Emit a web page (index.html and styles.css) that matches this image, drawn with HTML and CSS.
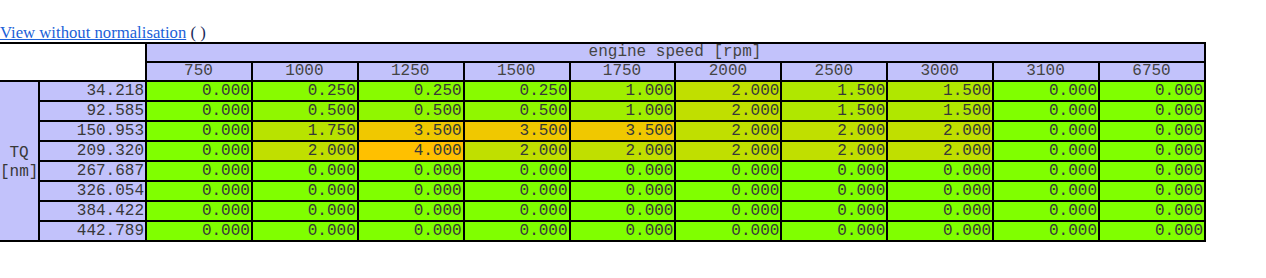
FILE: index.html
```html
<!DOCTYPE html>
<html>
<head>
<meta charset="utf-8">
<title>Map</title>
<link rel="stylesheet" href="styles.css">
</head>
<body>
<div class="toolbar"><a class="navlink" href="#">View without normalisation</a> <span class="paren">( )</span></div>
<table class="map">
<colgroup><col class="c-axis"><col class="c-row"><col><col><col><col><col><col><col><col><col><col></colgroup>
<tr class="hr"><td class="corner" colspan="2" rowspan="2"></td><th class="hd" colspan="10">engine speed [rpm]</th></tr>
<tr class="hr"><th class="hd">750</th><th class="hd">1000</th><th class="hd">1250</th><th class="hd">1500</th><th class="hd">1750</th><th class="hd">2000</th><th class="hd">2500</th><th class="hd">3000</th><th class="hd">3100</th><th class="hd">6750</th></tr>
<tr class="dr"><th class="axis" rowspan="8">TQ<br>[nm]</th><th class="rh">34.218</th><td class="v0">0.000</td><td class="v025">0.250</td><td class="v025">0.250</td><td class="v025">0.250</td><td class="v1">1.000</td><td class="v2">2.000</td><td class="v15">1.500</td><td class="v15">1.500</td><td class="v0">0.000</td><td class="v0">0.000</td></tr>
<tr class="dr"><th class="rh">92.585</th><td class="v0">0.000</td><td class="v05">0.500</td><td class="v05">0.500</td><td class="v05">0.500</td><td class="v1">1.000</td><td class="v2">2.000</td><td class="v15">1.500</td><td class="v15">1.500</td><td class="v0">0.000</td><td class="v0">0.000</td></tr>
<tr class="dr"><th class="rh">150.953</th><td class="v0">0.000</td><td class="v175">1.750</td><td class="v35">3.500</td><td class="v35">3.500</td><td class="v35">3.500</td><td class="v2">2.000</td><td class="v2">2.000</td><td class="v2">2.000</td><td class="v0">0.000</td><td class="v0">0.000</td></tr>
<tr class="dr"><th class="rh">209.320</th><td class="v0">0.000</td><td class="v2">2.000</td><td class="v4">4.000</td><td class="v2">2.000</td><td class="v2">2.000</td><td class="v2">2.000</td><td class="v2">2.000</td><td class="v2">2.000</td><td class="v0">0.000</td><td class="v0">0.000</td></tr>
<tr class="dr"><th class="rh">267.687</th><td class="v0">0.000</td><td class="v0">0.000</td><td class="v0">0.000</td><td class="v0">0.000</td><td class="v0">0.000</td><td class="v0">0.000</td><td class="v0">0.000</td><td class="v0">0.000</td><td class="v0">0.000</td><td class="v0">0.000</td></tr>
<tr class="dr"><th class="rh">326.054</th><td class="v0">0.000</td><td class="v0">0.000</td><td class="v0">0.000</td><td class="v0">0.000</td><td class="v0">0.000</td><td class="v0">0.000</td><td class="v0">0.000</td><td class="v0">0.000</td><td class="v0">0.000</td><td class="v0">0.000</td></tr>
<tr class="dr"><th class="rh">384.422</th><td class="v0">0.000</td><td class="v0">0.000</td><td class="v0">0.000</td><td class="v0">0.000</td><td class="v0">0.000</td><td class="v0">0.000</td><td class="v0">0.000</td><td class="v0">0.000</td><td class="v0">0.000</td><td class="v0">0.000</td></tr>
<tr class="dr"><th class="rh">442.789</th><td class="v0">0.000</td><td class="v0">0.000</td><td class="v0">0.000</td><td class="v0">0.000</td><td class="v0">0.000</td><td class="v0">0.000</td><td class="v0">0.000</td><td class="v0">0.000</td><td class="v0">0.000</td><td class="v0">0.000</td></tr>
</table>
</body>
</html>
```
FILE: styles.css
```css
html, body {
  margin: 0;
  padding: 0;
  background: #fff;
}
body {
  padding-top: 23px;
  font-family: "Liberation Serif", "Times New Roman", serif;
  font-size: 16px;
}
.toolbar {
  line-height: 19px;
  height: 19px;
  font-size: 16.7px;
}
.navlink {
  color: #1b5fd8;
  text-decoration: underline;
}
.paren {
  color: #1a2a5a;
}
.map {
  border-collapse: separate;
  border-spacing: 0;
  table-layout: fixed;
  width: 1206px;
  border-top: 2px solid #000;
  font-family: "Liberation Mono", "Courier New", monospace;
  font-size: 16px;
  color: #383838;
}
.c-axis { width: 40px; }
.c-row { width: 107px; }
.map th, .map td {
  box-sizing: border-box;
  padding: 0 1px 0 0;
  border-right: 2px solid #000;
  border-bottom: 2px solid #000;
  font-weight: normal;
  white-space: nowrap;
  overflow: hidden;
}
.hr { height: 19px; }
.hr th, .hr td { line-height: 17px; }
.dr { height: 20px; }
.dr th, .dr td { line-height: 18px; text-align: right; }
.corner { background: #fff; }
.hd {
  background: #c2c2fb;
  text-align: center;
  color: #444;
}
.map .axis {
  background: #c2c2fb;
  text-align: center;
  vertical-align: middle;
  line-height: 19px;
  padding: 3px 0 0 0;
}
.map .rh {
  background: #c2c2fb;
  text-align: right;
  padding-right: 1px;
}
.v0 { background: #80ff00; }
.v025 { background: #88fb00; }
.v05 { background: #90f700; }
.v1 { background: #a0ef00; }
.v15 { background: #b0e700; }
.v175 { background: #b8e300; }
.v2 { background: #c0df00; }
.v35 { background: #f0c800; }
.v4 { background: #ffc000; }
```
